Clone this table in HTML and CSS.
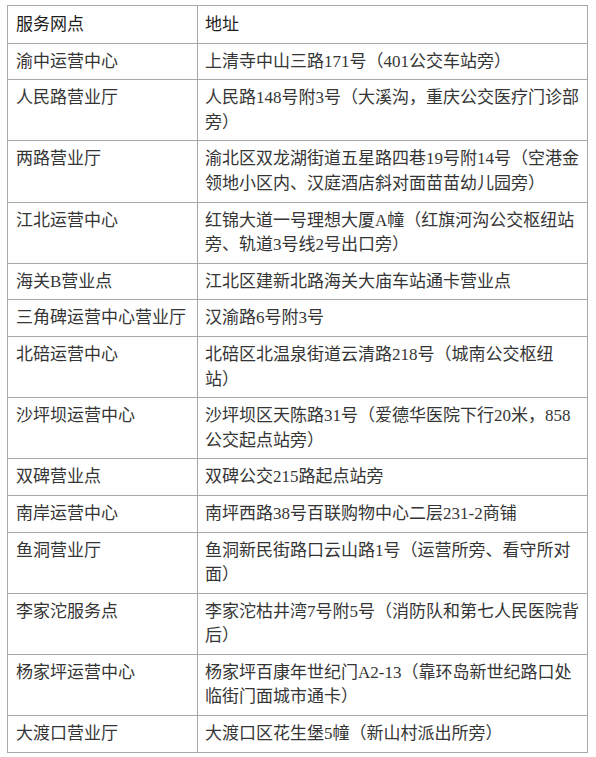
FILE: index.html
```html
<!DOCTYPE html>
<html lang="zh-CN">
<head>
<meta charset="utf-8">
<title>服务网点</title>
<link rel="stylesheet" href="styles.css">
</head>
<body>
<table class="outlets">
  <colgroup><col class="col-name"><col class="col-addr"></colgroup>
  <thead>
    <tr><th>服务网点</th><th>地址</th></tr>
  </thead>
  <tbody>
    <tr><td>渝中运营中心</td><td>上清寺中山三路171号（401公交车站旁）</td></tr>
    <tr><td>人民路营业厅</td><td>人民路148号附3号（大溪沟，重庆公交医疗门诊部<br>旁）</td></tr>
    <tr><td>两路营业厅</td><td>渝北区双龙湖街道五星路四巷19号附14号（空港金<br>领地小区内、汉庭酒店斜对面苗苗幼儿园旁）</td></tr>
    <tr><td>江北运营中心</td><td>红锦大道一号理想大厦A幢（红旗河沟公交枢纽站<br>旁、轨道3号线2号出口旁）</td></tr>
    <tr><td>海关B营业点</td><td>江北区建新北路海关大庙车站通卡营业点</td></tr>
    <tr><td>三角碑运营中心营业厅</td><td>汉渝路6号附3号</td></tr>
    <tr><td>北碚运营中心</td><td>北碚区北温泉街道云清路218号（城南公交枢纽<br>站）</td></tr>
    <tr><td>沙坪坝运营中心</td><td>沙坪坝区天陈路31号（爱德华医院下行20米，858<br>公交起点站旁）</td></tr>
    <tr><td>双碑营业点</td><td>双碑公交215路起点站旁</td></tr>
    <tr><td>南岸运营中心</td><td>南坪西路38号百联购物中心二层231-2商铺</td></tr>
    <tr><td>鱼洞营业厅</td><td>鱼洞新民街路口云山路1号（运营所旁、看守所对<br>面）</td></tr>
    <tr><td>李家沱服务点</td><td>李家沱枯井湾7号附5号（消防队和第七人民医院背<br>后）</td></tr>
    <tr><td>杨家坪运营中心</td><td>杨家坪百康年世纪门A2-13（靠环岛新世纪路口处<br>临街门面城市通卡）</td></tr>
    <tr><td>大渡口营业厅</td><td>大渡口区花生堡5幢（新山村派出所旁）</td></tr>
  </tbody>
</table>
</body>
</html>
```

FILE: styles.css
```css
html, body {
  background: #ffffff;
}
body {
  margin: 5px 0 0 7px;
  font-family: "Liberation Serif", "Noto Sans CJK SC", serif;
  font-size: 17px;
  color: #353535;
}
.outlets {
  border-collapse: collapse;
  width: 581px;
  table-layout: fixed;
}
.col-name {
  width: 190px;
}
.outlets th,
.outlets td {
  border: 1px solid #a8a8a8;
  padding: 6px 6px 5px 7px;
  line-height: 24.6px;
  text-align: left;
  vertical-align: top;
  white-space: nowrap;
  overflow: hidden;
}
.outlets th {
  font-weight: normal;
  color: #1e1e1e;
  padding-top: 7px;
}
.outlets td:first-child,
.outlets th:first-child {
  padding-left: 8px;
}
```
